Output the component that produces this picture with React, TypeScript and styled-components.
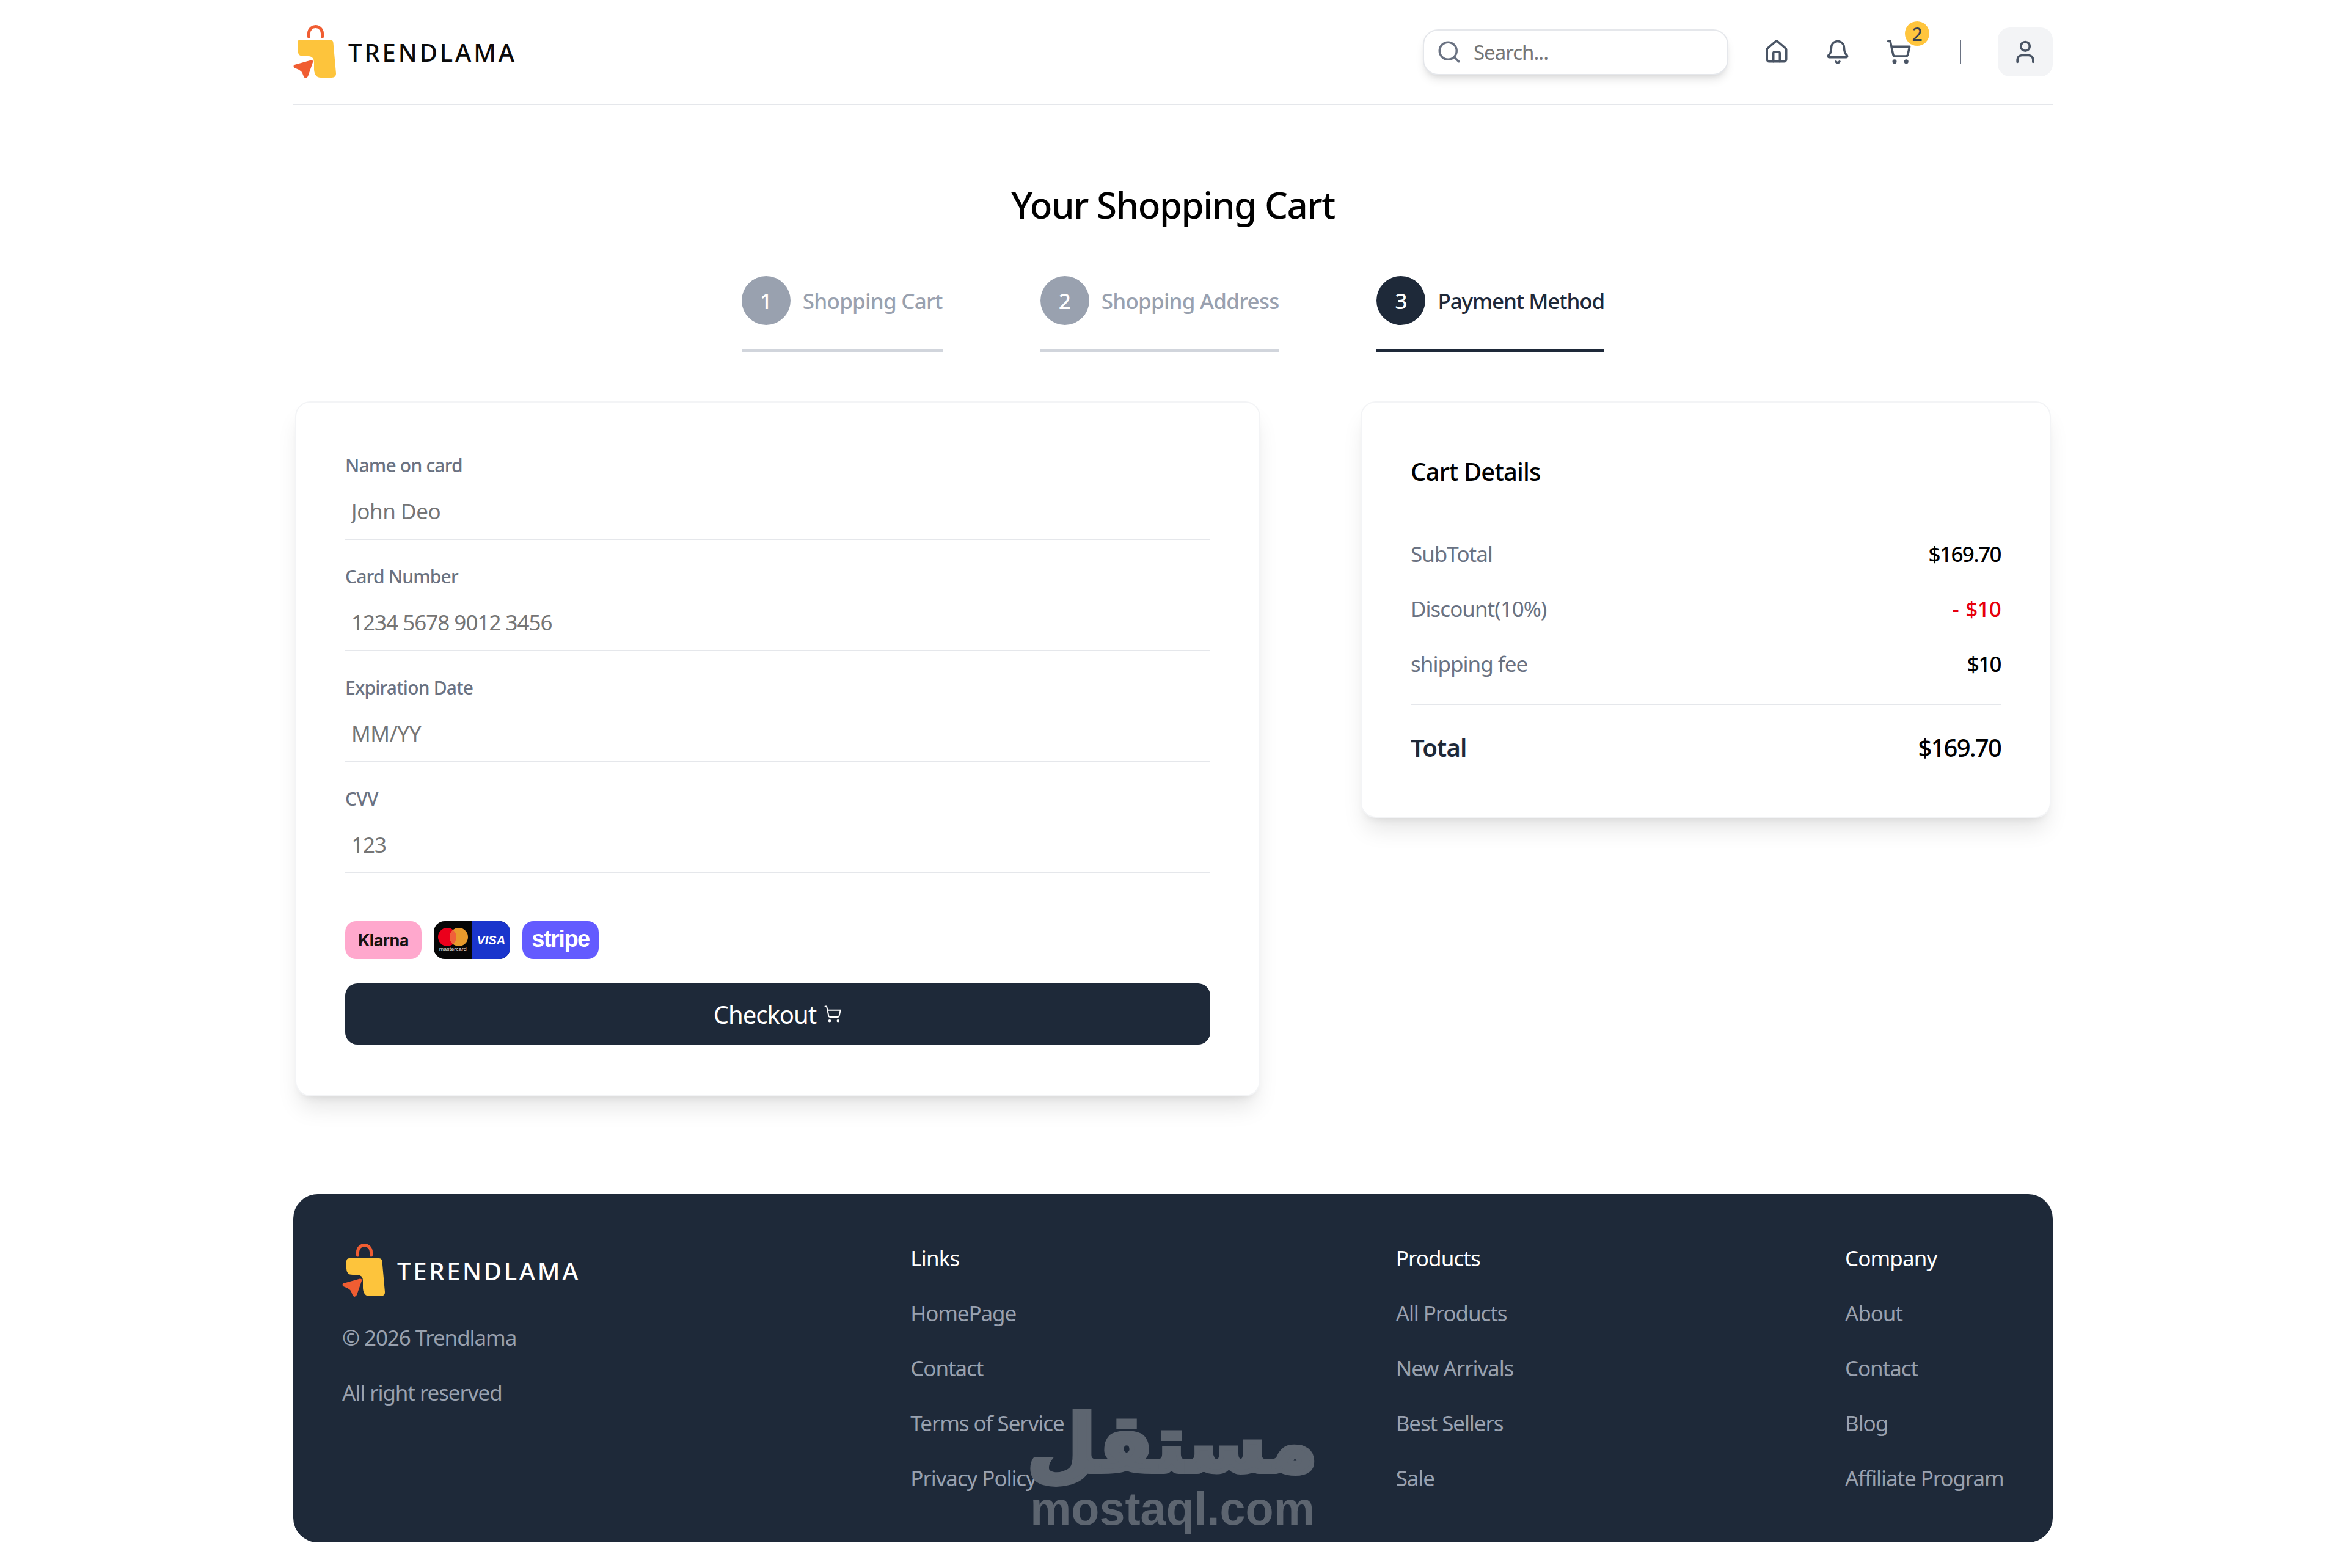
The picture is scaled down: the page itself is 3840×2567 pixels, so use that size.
import styled, { createGlobalStyle } from "styled-components";
import { Bell, House, Search, ShoppingCart, User } from "lucide-react";

const GlobalStyle = createGlobalStyle`
  * { box-sizing: border-box; }
  body {
    margin: 0;
    background: #fff;
    color: #000;
    font-family: "Noto Sans", "Open Sans", sans-serif;
  }
  input { font-family: inherit; }
`;

const LogoMark = () => (
  <LogoSvg width="72" height="90" viewBox="0 0 72 90" fill="none">
    <path d="M25.5 20V14.5a11 11 0 0 1 22 0V20" stroke="#f05d32" strokeWidth="5" strokeLinecap="round" />
    <path
      d="M12 25H60Q65 25 65.5 30L70 80Q70.5 87 63 87H45Q35 87 34 74L34 62Q34 52 24 52H17Q7 52 7 42L7 30Q7 25 12 25Z"
      fill="#fdc43c"
    />
    <path
      d="M29 58.5Q33 58 32 62L24 85Q20 91 17 85L15 80Q13 76 9 74L2 71Q-1 68 2 66Z"
      fill="#f05d32"
    />
  </LogoSvg>
);

const fields = [
  { label: "Name on card", placeholder: "John Deo" },
  { label: "Card Number", placeholder: "1234 5678 9012 3456", numeric: true },
  { label: "Expiration Date", placeholder: "MM/YY" },
  { label: "CVV", placeholder: "123", numeric: true },
];

const footerColumns = [
  { title: "Links", width: 250, links: ["HomePage", "Contact", "Terms of Service", "Privacy Policy"] },
  { title: "Products", width: 191, links: ["All Products", "New Arrivals", "Best Sellers", "Sale"] },
  { title: "Company", width: 260, links: ["About", "Contact", "Blog", "Affiliate Program"] },
];

export default function App() {
  return (
    <Page>
      <GlobalStyle />
      <Header>
        <Brand>
          <LogoMark />
          <BrandName>TRENDLAMA</BrandName>
        </Brand>
        <HeaderActions>
          <SearchBox>
            <Search size={42} color="#6a7282" strokeWidth={2} />
            <SearchInput placeholder="Search..." />
          </SearchBox>
          <NavIcon><House size={42} strokeWidth={2} /></NavIcon>
          <NavIcon><Bell size={42} strokeWidth={2} /></NavIcon>
          <NavIcon>
            <ShoppingCart size={42} strokeWidth={2} />
            <CartBadge>2</CartBadge>
          </NavIcon>
          <Separator />
          <UserButton><User size={44} strokeWidth={2} /></UserButton>
        </HeaderActions>
      </Header>

      <Title>Your Shopping Cart</Title>

      <Steps>
        <Step>
          <StepNumber>1</StepNumber>
          <StepLabel>Shopping Cart</StepLabel>
        </Step>
        <Step>
          <StepNumber>2</StepNumber>
          <StepLabel>Shopping Address</StepLabel>
        </Step>
        <Step $active>
          <StepNumber $active>3</StepNumber>
          <StepLabel $active>Payment Method</StepLabel>
        </Step>
      </Steps>

      <Columns>
        <Card as="form">
          <Fields>
            {fields.map((field) => (
              <Field key={field.label}>
                <FieldLabel>{field.label}</FieldLabel>
                <FieldInput placeholder={field.placeholder} $numeric={field.numeric} />
              </Field>
            ))}
          </Fields>
          <Badges>
            <Klarna>Klarna</Klarna>
            <CardsBadge>
              <MasterHalf>
                <svg width="49" height="30" viewBox="0 0 49 30">
                  <circle cx="15" cy="15" r="15" fill="#eb001b" />
                  <circle cx="34" cy="15" r="15" fill="#e89a2c" />
                  <path d="M24.5 3.4a15 15 0 0 1 0 23.2a15 15 0 0 1 0-23.2Z" fill="#f0603a" />
                </svg>
                <MasterText>mastercard</MasterText>
              </MasterHalf>
              <VisaHalf>VISA</VisaHalf>
            </CardsBadge>
            <Stripe>stripe</Stripe>
          </Badges>
          <CheckoutButton type="button">
            Checkout <ShoppingCart size={30} strokeWidth={1.6} />
          </CheckoutButton>
        </Card>

        <Card>
          <SummaryTitle>Cart Details</SummaryTitle>
          <SummaryRows>
            <SummaryRow>
              <SummaryName>SubTotal</SummaryName>
              <SummaryValue>$169.70</SummaryValue>
            </SummaryRow>
            <SummaryRow>
              <SummaryName>Discount(10%)</SummaryName>
              <SummaryValue $red>- $10</SummaryValue>
            </SummaryRow>
            <SummaryRow>
              <SummaryName>shipping fee</SummaryName>
              <SummaryValue>$10</SummaryValue>
            </SummaryRow>
          </SummaryRows>
          <Divider />
          <TotalRow>
            <TotalName>Total</TotalName>
            <TotalValue>$169.70</TotalValue>
          </TotalRow>
        </Card>
      </Columns>

      <Footer>
        <FooterBrandColumn>
          <Brand>
            <LogoMark />
            <BrandName $light>TERENDLAMA</BrandName>
          </Brand>
          <FooterText>© 2026 Trendlama</FooterText>
          <FooterText>All right reserved</FooterText>
        </FooterBrandColumn>
        {footerColumns.map((column) => (
          <FooterColumn key={column.title} $width={column.width}>
            <FooterHeading>{column.title}</FooterHeading>
            {column.links.map((link) => (
              <FooterText key={link}>{link}</FooterText>
            ))}
          </FooterColumn>
        ))}
        <Watermark>
          <WatermarkArabic>مستقل</WatermarkArabic>
          <WatermarkLatin>mostaql.com</WatermarkLatin>
        </Watermark>
      </Footer>
    </Page>
  );
}

const Page = styled.div`
  width: 2880px;
  margin: 0 auto;
  padding-bottom: 40px;
`;

const LogoSvg = styled.svg`
  flex-shrink: 0;
`;

const Header = styled.header`
  display: flex;
  align-items: center;
  justify-content: space-between;
  height: 172px;
  padding-top: 40px;
  padding-bottom: 40px;
  border-bottom: 2px solid #e5e7eb;
`;

const Brand = styled.div`
  display: flex;
  align-items: center;
  gap: 18px;
  height: 90px;
`;

const BrandName = styled.span<{ $light?: boolean }>`
  font-size: 40px;
  font-weight: 500;
  letter-spacing: ${({ $light }) => ($light ? "3.7px" : "3.9px")};
  white-space: nowrap;
  color: ${({ $light }) => ($light ? "#fff" : "#0a0a0a")};
`;

const HeaderActions = styled.div`
  display: flex;
  align-items: center;
  gap: 50px;
`;

const SearchBox = styled.label`
  display: flex;
  align-items: center;
  gap: 19px;
  width: 500px;
  height: 75px;
  margin-right: 4px;
  padding: 0 20px;
  background: #fff;
  border: 2px solid #e5e7eb;
  border-radius: 25px;
  box-shadow: 0 10px 15px -2.5px rgba(0, 0, 0, 0.1), 0 5px 10px -5px rgba(0, 0, 0, 0.1);
`;

const SearchInput = styled.input`
  flex: 1;
  min-width: 0;
  border: 0;
  outline: 0;
  padding: 0;
  font-size: 33px;
  letter-spacing: -1px;
  color: #4a5565;
  &::placeholder { color: #757575; opacity: 1; }
`;

const NavIcon = styled.div`
  position: relative;
  display: flex;
  align-items: center;
  justify-content: center;
  width: 50px;
  height: 50px;
  color: #4a5565;
`;

const CartBadge = styled.span`
  position: absolute;
  top: -25px;
  right: -25px;
  display: flex;
  align-items: center;
  justify-content: center;
  width: 40px;
  height: 40px;
  border-radius: 50%;
  background: #ffc53d;
  color: #374151;
  font-size: 30px;
  font-weight: 500;
`;

const Separator = styled.div`
  width: 2px;
  height: 40px;
  margin: 0 10px 0 25px;
  background: #6a7282;
`;

const UserButton = styled.div`
  display: flex;
  align-items: center;
  justify-content: center;
  width: 90px;
  height: 80px;
  border-radius: 20px;
  background: #f3f4f6;
  color: #4a5565;
`;

const Title = styled.h1`
  margin: 123px 0 0;
  font-size: 60px;
  line-height: 80px;
  font-weight: 500;
  letter-spacing: -1.5px;
  text-align: center;
  color: #000;
`;

const Steps = styled.div`
  display: flex;
  justify-content: center;
  gap: 160px;
  margin-top: 77px;
`;

const Step = styled.div<{ $active?: boolean }>`
  display: flex;
  align-items: center;
  gap: 20px;
  padding-bottom: 40px;
  border-bottom: 5px solid ${({ $active }) => ($active ? "#1e2939" : "#d1d5dc")};
`;

const StepNumber = styled.div<{ $active?: boolean }>`
  display: flex;
  align-items: center;
  justify-content: center;
  width: 80px;
  height: 80px;
  border-radius: 50%;
  font-size: 35px;
  font-weight: 500;
  color: #fff;
  background: ${({ $active }) => ($active ? "#1e2939" : "#99a1af")};
`;

const StepLabel = styled.span<{ $active?: boolean }>`
  font-size: 35px;
  font-weight: 500;
  letter-spacing: ${({ $active }) => ($active ? "-1.1px" : "-0.75px")};
  white-space: nowrap;
  color: ${({ $active }) => ($active ? "#1e2939" : "#99a1af")};
`;

const Columns = styled.div`
  display: grid;
  grid-template-columns: 1580px 1fr;
  align-items: start;
  gap: 164px;
  margin-top: 80px;
  padding: 0 3px;
`;

const Card = styled.div`
  padding: 83px 80px;
  background: #fff;
  border: 2px solid #f3f4f6;
  border-radius: 25px;
  box-shadow: 0 25px 37.5px -7.5px rgba(0, 0, 0, 0.1), 0 10px 15px -10px rgba(0, 0, 0, 0.1);
`;

const Fields = styled.div`
  display: flex;
  flex-direction: column;
  gap: 40px;
`;

const Field = styled.label`
  display: flex;
  flex-direction: column;
  gap: 20px;
`;

const FieldLabel = styled.span`
  font-size: 30px;
  line-height: 40px;
  font-weight: 500;
  letter-spacing: -0.8px;
  color: #6a7282;
`;

const FieldInput = styled.input<{ $numeric?: boolean }>`
  height: 82px;
  padding: 0 10px 12px;
  border: 0;
  border-bottom: 2px solid #e5e7eb;
  outline: 0;
  font-size: 35px;
  letter-spacing: ${({ $numeric }) => ($numeric ? "-1px" : "-0.4px")};
  &::placeholder { color: #757575; opacity: 1; }
`;

const Badges = styled.div`
  display: flex;
  gap: 20px;
  margin-top: 78px;
`;

const Badge = styled.div`
  display: flex;
  align-items: center;
  justify-content: center;
  width: 125px;
  height: 62px;
  border-radius: 18px;
  overflow: hidden;
`;

const Klarna = styled(Badge)`
  background: #ffa8cd;
  color: #17120f;
  font-family: "Inter", sans-serif;
  font-size: 27px;
  font-weight: 700;
  letter-spacing: -0.5px;
`;

const CardsBadge = styled(Badge)`
  background: #060606;
`;

const MasterHalf = styled.div`
  display: flex;
  flex: 1;
  flex-direction: column;
  align-items: center;
  gap: 1px;
`;

const MasterText = styled.span`
  font-family: "Liberation Sans", sans-serif;
  font-size: 9px;
  line-height: 9px;
  color: #d8d8d8;
`;

const VisaHalf = styled.div`
  display: flex;
  flex: 1;
  align-items: center;
  justify-content: center;
  height: 100%;
  background: #1a35cc;
  color: #fff;
  font-family: "Liberation Sans", sans-serif;
  font-size: 20px;
  font-style: italic;
  font-weight: 700;
`;

const Stripe = styled(Badge)`
  padding-bottom: 4px;
  background: #635bff;
  color: #fff;
  font-family: "Liberation Sans", sans-serif;
  font-size: 38px;
  font-weight: 700;
  letter-spacing: -1.5px;
`;

const CheckoutButton = styled.button`
  display: flex;
  align-items: center;
  justify-content: center;
  gap: 12px;
  width: 100%;
  height: 100px;
  margin-top: 40px;
  padding: 0;
  border: 0;
  border-radius: 20px;
  background: #1e2939;
  color: #fff;
  font-family: inherit;
  font-size: 40px;
  letter-spacing: -1px;
`;

const SummaryTitle = styled.h2`
  margin: 0;
  font-size: 40px;
  line-height: 60px;
  font-weight: 500;
  letter-spacing: -0.8px;
  color: #000;
`;

const SummaryRows = styled.div`
  display: flex;
  flex-direction: column;
  gap: 40px;
  margin-top: 80px;
`;

const SummaryRow = styled.div`
  display: flex;
  justify-content: space-between;
  font-size: 35px;
  line-height: 50px;
`;

const SummaryName = styled.span`
  letter-spacing: -1px;
  color: #6a7282;
`;

const SummaryValue = styled.span<{ $red?: boolean }>`
  font-weight: 500;
  letter-spacing: ${({ $red }) => ($red ? "-0.8px" : "-1.6px")};
  word-spacing: 3px;
  color: ${({ $red }) => ($red ? "#e7000b" : "#000")};
`;

const Divider = styled.div`
  height: 2px;
  margin: 40px 0;
  background: #e5e7eb;
`;

const TotalRow = styled.div`
  display: flex;
  justify-content: space-between;
  font-size: 40px;
  line-height: 60px;
  font-weight: 500;
`;

const TotalName = styled.span`
  font-weight: 600;
  letter-spacing: -0.8px;
  color: #1e2939;
`;

const TotalValue = styled.span`
  letter-spacing: -1.8px;
  color: #000;
`;

const Footer = styled.footer`
  position: relative;
  display: flex;
  justify-content: space-between;
  align-items: flex-start;
  margin-top: 160px;
  padding: 80px;
  background: #1e2939;
  border-radius: 40px;
`;

const FooterColumn = styled.div<{ $width: number }>`
  display: flex;
  flex-direction: column;
  gap: 40px;
  width: ${({ $width }) => $width}px;
`;

const FooterBrandColumn = styled.div`
  display: flex;
  flex-direction: column;
  gap: 40px;
  width: 386px;
`;

const FooterHeading = styled.span`
  font-size: 35px;
  line-height: 50px;
  letter-spacing: -0.9px;
  color: #fff;
  white-space: nowrap;
`;

const FooterText = styled.span`
  font-size: 35px;
  line-height: 50px;
  letter-spacing: -1.1px;
  color: #99a1af;
  white-space: nowrap;
`;

const Watermark = styled.div`
  position: absolute;
  left: 1209px;
  top: 338px;
  display: flex;
  flex-direction: column;
  align-items: center;
  width: 460px;
  color: #5d6570;
`;

const WatermarkArabic = styled.span`
  font-family: "DejaVu Sans", sans-serif;
  font-size: 130px;
  line-height: 142px;
  font-weight: 700;
  white-space: nowrap;
  -webkit-text-stroke: 8px #5d6570;
`;

const WatermarkLatin = styled.span`
  font-family: "Liberation Sans", sans-serif;
  font-size: 75.5px;
  line-height: 70px;
  font-weight: 700;
  white-space: nowrap;
`;
